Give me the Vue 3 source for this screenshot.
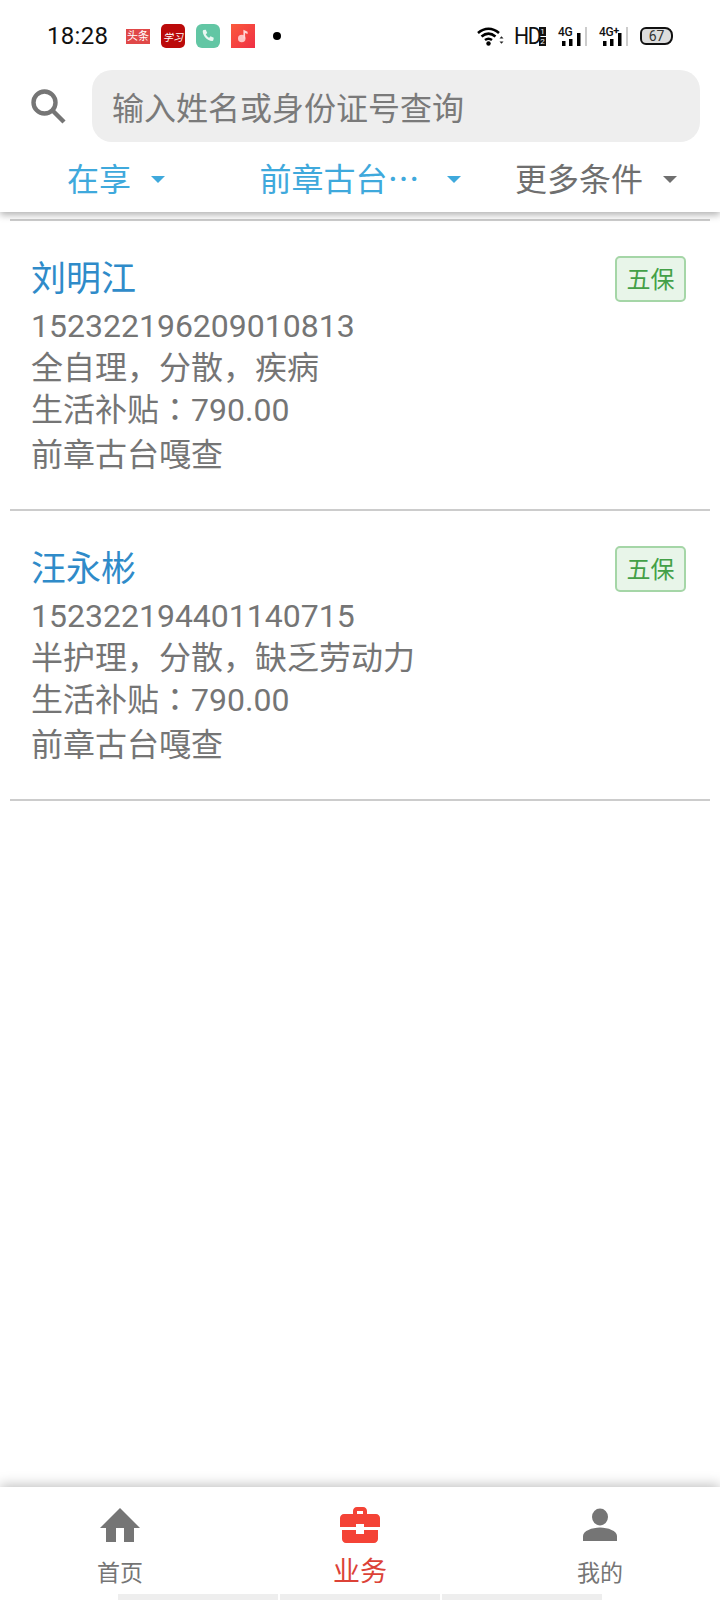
<template>
  <div class="page">
    <header class="top">
      <div class="status-bar">
        <span class="clock">18:28</span>
        <div class="notify">
          <span class="toutiao">头条</span>
          <span class="app app-xuexi">学习</span>
          <span class="app app-phone">
            <svg viewBox="0 0 24 24" width="18" height="18"><path d="M6 4l3 -.5 2 4.500-2 1.600c.8 2 2.600 3.800 4.600 4.700l1.700-2 4.400 2-.6 3.200c-.2.700-.8 1-1.500 1C10.800 18 5 11.500 5 5.500c0-.7.300-1.300 1-1.500z" fill="#e8f7f1"/></svg>
          </span>
          <span class="app app-music">
            <svg viewBox="0 0 24 24" width="20" height="20"><circle cx="10.500" cy="15" r="4.500" fill="#ffc4c4"/><path d="M12.500 15V4.500l5 2.500v2.500l-3-1.200V15z" fill="#ffd6d6"/></svg>
          </span>
          <span class="dot"></span>
        </div>
        <div class="sys">
          <svg class="wifi" viewBox="0 0 27 20" width="27" height="20">
            <path d="M1 7c6.500-5.600 14.500-5.600 21 0M4.500 10.500c4.500-3.700 9.500-3.700 14 0M8 14c2.500-1.800 4.500-1.800 7 0" fill="none" stroke="#000" stroke-width="2.600"/>
            <circle cx="11.500" cy="17.500" r="2.200" fill="#000"/>
            <path d="M22.500 12.500l2-2.200 2 2.200zM22.500 15.500l2 2.200 2-2.200z" fill="#222"/>
          </svg>
          <span class="hd">HD</span>
          <span class="sim"><i>1</i><i>2</i></span>
          <span class="net">
            <span class="net-label">4G</span>
            <svg viewBox="0 0 30 19" width="30" height="19"><path d="M4 14h3.500v5H4zM11 12h3.500v7H11zM19 6h3.500v13H19z" fill="#000"/><path d="M27 0h2v19h-2z" fill="#ccc"/></svg>
          </span>
          <span class="net">
            <span class="net-label">4G<sup>+</sup></span>
            <svg viewBox="0 0 30 19" width="30" height="19"><path d="M4 14h3.500v5H4zM11 12h3.500v7H11zM19 6h3.500v13H19z" fill="#000"/><path d="M27 0h2v19h-2z" fill="#ccc"/></svg>
          </span>
          <span class="battery"><span>67</span></span>
        </div>
      </div>

      <div class="search-row">
        <svg class="search-icon" viewBox="0 0 36 36" width="36" height="36">
          <circle cx="14.500" cy="14.500" r="11" fill="none" stroke="#757575" stroke-width="4.400"/>
          <path d="M22.500 22.500L34 34" stroke="#757575" stroke-width="4.400" fill="none"/>
        </svg>
        <div class="search-input">输入姓名或身份证号查询</div>
      </div>

      <div class="filters">
        <div v-for="f in filters" :key="f.label" class="filter" :class="{ active: f.active }">
          <span class="filter-label">{{ f.label }}</span>
          <span class="caret"></span>
        </div>
      </div>
    </header>

    <main class="list">
      <div class="list-top"></div>
      <div v-for="p in people" :key="p.id" class="person">
        <div class="person-head">
          <span class="person-name">{{ p.name }}</span>
          <span class="tag">五保</span>
        </div>
        <div class="line">{{ p.id }}</div>
        <div class="line">{{ p.desc }}</div>
        <div class="line">生活补贴<span class="colon">：</span>790.00</div>
        <div class="line last">前章古台嘎查</div>
      </div>
    </main>

    <nav class="tabbar">
      <div class="tab">
        <svg viewBox="0 0 40 34" width="40" height="34"><path d="M20 0L40 20H34V34H24V20H16V34H6V20H0z" fill="#757575"/></svg>
        <span>首页</span>
      </div>
      <div class="tab current">
        <svg viewBox="0 0 40 36" width="40" height="36">
          <path d="M13 7V4c0-2 1.500-4 4-4h6c2.500 0 4 2 4 4v3h-4V4h-6v3z" fill="#f44336"/>
          <path d="M4 7h32c2.200 0 4 1.800 4 4v9H24v-3h-8v3H0v-9c0-2.200 1.800-4 4-4z" fill="#f44336"/>
          <path d="M2 23h14v4h8v-4h14v9c0 2.200-1.800 4-4 4H6c-2.200 0-4-1.800-4-4z" fill="#f44336"/>
        </svg>
        <span>业务</span>
      </div>
      <div class="tab">
        <svg viewBox="0 0 34 32" width="34" height="32"><ellipse cx="17" cy="8" rx="8" ry="8.500" fill="#757575"/><path d="M0 32v-5c0-5 9-8.500 17-8.500S34 22 34 27v5z" fill="#757575"/></svg>
        <span>我的</span>
      </div>
      <div class="home-strip"><i></i><i></i><i></i></div>
    </nav>
  </div>
</template>

<script setup>
const filters = [
  { label: '在享', active: true },
  { label: '前章古台…', active: true },
  { label: '更多条件', active: false }
]

const people = [
  { name: '刘明江', id: '152322196209010813', desc: '全自理，分散，疾病' },
  { name: '汪永彬', id: '152322194401140715', desc: '半护理，分散，缺乏劳动力' }
]
</script>

<style>
html, body {
  margin: 0;
  background: #fff;
}
</style>

<style scoped>
.page {
  width: 720px;
  height: 1600px;
  display: flex;
  flex-direction: column;
  overflow: hidden;
  background: #fff;
  font-family: Roboto, "Noto Sans CJK SC", sans-serif;
}

.top {
  height: 212px;
  flex-shrink: 0;
  box-shadow: 0 3px 7px rgba(0, 0, 0, 0.3);
  position: relative;
  z-index: 2;
  background: #fff;
}

.status-bar {
  height: 70px;
  display: flex;
  align-items: center;
  padding: 2px 47px 0 47px;
  box-sizing: border-box;
}

.clock {
  font-size: 24px;
  color: #111;
  width: 79px;
  letter-spacing: 0.3px;
}

.notify {
  display: flex;
  align-items: center;
  gap: 11px;
}

.toutiao {
  width: 24px;
  height: 15px;
  background: #e04848;
  color: #fff;
  font-size: 11px;
  line-height: 15px;
  text-align: center;
  white-space: nowrap;
}

.app {
  width: 24px;
  height: 24px;
  display: flex;
  align-items: center;
  justify-content: center;
  border-radius: 5px;
}

.app-xuexi {
  background: #bb0a0a;
  color: #fff;
  font-size: 10px;
  font-style: italic;
}

.app-phone {
  background: #62c6a4;
  border-radius: 6px;
}

.app-music {
  background: linear-gradient(135deg, #fb5a3c, #ef2f45);
  border-radius: 0;
}

.dot {
  width: 8px;
  height: 8px;
  border-radius: 50%;
  background: #000;
  margin-left: 7px;
}

.sys {
  margin-left: auto;
  display: flex;
  align-items: center;
}

.hd {
  font-size: 23px;
  color: #111;
  margin-left: 10px;
  letter-spacing: -1.5px;
  transform: scaleX(0.92);
  transform-origin: left center;
  width: 25px;
}

.sim {
  display: flex;
  flex-direction: column;
  gap: 1px;
  margin-right: 12px;
}

.sim i {
  width: 7px;
  height: 9px;
  background: #111;
  color: #fff;
  font-size: 8px;
  line-height: 9px;
  text-align: center;
  font-style: normal;
}

.net {
  position: relative;
  width: 30px;
  height: 19px;
  margin-right: 11px;
  display: flex;
}

.net-label {
  position: absolute;
  left: 0;
  top: 0;
  font-size: 12px;
  line-height: 11px;
  font-weight: 500;
  color: #111;
  white-space: nowrap;
  letter-spacing: -0.4px;
}

.net-label sup {
  font-size: 11px;
  line-height: 0;
  vertical-align: 2px;
  font-weight: 700;
}

.battery {
  width: 33px;
  height: 18px;
  box-sizing: border-box;
  border: 2px solid #111;
  border-radius: 6px 8px 8px 6px;
  background: #ddd;
  display: flex;
  align-items: center;
  justify-content: center;
  font-size: 14px;
  color: #333;
}

.search-row {
  height: 72px;
  display: flex;
  align-items: center;
  padding: 0 20px 0 30px;
}

.search-icon {
  width: 36px;
  height: 36px;
  margin-right: 26px;
  flex-shrink: 0;
}

.search-input {
  flex: 1;
  height: 72px;
  line-height: 78px;
  background: #eee;
  border-radius: 20px;
  padding-left: 20px;
  font-size: 32px;
  color: #7a7a7a;
}

.filters {
  display: grid;
  grid-template-columns: repeat(3, 1fr);
  height: 70px;
}

.filter {
  display: flex;
  align-items: center;
  justify-content: center;
  padding-right: 8px;
  font-size: 32px;
  font-family: "Noto Sans CJK SC", sans-serif;
  color: #6f6f6f;
}

.filter.active {
  color: #3fa9dc;
}

.filter-label {
  white-space: nowrap;
}

.filter:nth-child(2) {
  padding-right: 0;
}

.filter:nth-child(2) .filter-label {
  padding-right: 7px;
}

.caret {
  width: 0;
  height: 0;
  margin-left: 20px;
  margin-top: 4px;
  border-left: 7px solid transparent;
  border-right: 7px solid transparent;
  border-top: 7px solid currentColor;
}

.list {
  flex: 1;
  min-height: 0;
}

.list-top {
  margin: 7px 10px 0;
  height: 2px;
  background: #ccc;
}

.person {
  margin: 0 10px;
  padding: 35px 24px 0 21px;
  height: 290px;
  box-sizing: border-box;
  border-bottom: 2px solid #ccc;
}

.person-head {
  height: 49px;
  display: flex;
  justify-content: space-between;
  align-items: flex-start;
}

.person-name {
  font-size: 35px;
  line-height: 47px;
  color: #2f8bc9;
}

.tag {
  width: 71px;
  height: 46px;
  box-sizing: border-box;
  line-height: 44px;
  text-align: center;
  font-size: 24px;
  color: #43a047;
  background: #e8f5e9;
  border: 2px solid #a5d6a7;
  border-radius: 5px;
}

.line {
  font-size: 32px;
  height: 42px;
  line-height: 42px;
  color: #757575;
}

.colon {
  font-family: "Noto Sans CJK TC", sans-serif;
  line-height: 0;
}

.line.last {
  margin-top: 3px;
}

.tabbar {
  height: 113px;
  flex-shrink: 0;
  display: grid;
  grid-template-columns: repeat(3, 1fr);
  grid-template-rows: 107px 6px;
  box-shadow: 0 -2px 12px rgba(0, 0, 0, 0.25);
  background: #fff;
  position: relative;
}

.tab {
  display: flex;
  flex-direction: column;
  align-items: center;
  padding-top: 20px;
  font-size: 23px;
  line-height: 30px;
  color: #757575;
}

.tab svg {
  height: 36px;
  margin-bottom: 16px;
}

.tab.current {
  color: #dc4237;
  font-size: 27px;
}

.tab.current svg {
  margin-bottom: 14px;
}

.home-strip {
  grid-column: 1 / -1;
  display: flex;
  justify-content: center;
  gap: 2px;
}

.home-strip i {
  width: 160px;
  background: #eee;
}
</style>
